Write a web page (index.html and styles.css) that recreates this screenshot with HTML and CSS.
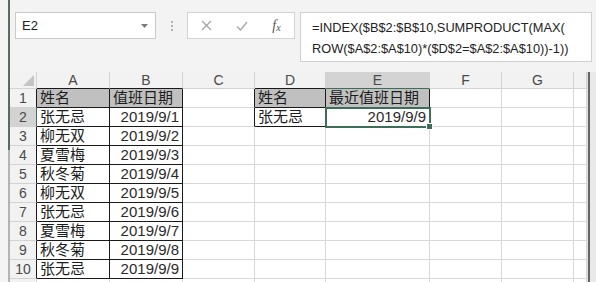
FILE: index.html
```html
<!DOCTYPE html>
<html lang="zh-CN">
<head>
  <meta charset="UTF-8" />
  <title>值班日期</title>
  <link rel="stylesheet" href="styles.css">
</head>
<body>
  <div class="window">
    <div class="edge">
      <div class="edge-top"></div>
      <div class="edge-rest"></div>
    </div>

    <div class="main">
      <!-- name box + formula bar -->
      <div class="toolbar">
        <div class="name-box">
          <span>E2</span>
          <svg class="caret" width="7" height="4" viewBox="0 0 7 4"><path d="M0 0h7L3.5 4z" fill="#7a7a7a"/></svg>
        </div>
        <div class="grip"><i></i><i></i><i></i></div>
        <div class="fx-buttons">
          <span class="btn">
            <svg width="11" height="11" viewBox="0 0 11 11"><path d="M1 1l9 9M10 1l-9 9" stroke="#a3a3a3" stroke-width="1.3" fill="none"/></svg>
          </span>
          <span class="btn">
            <svg width="12" height="10" viewBox="0 0 12 10"><path d="M1 5.5l3.5 3.5L11 1" stroke="#acacac" stroke-width="1.5" fill="none"/></svg>
          </span>
          <span class="btn fx"><em>f</em><em class="sub">x</em></span>
        </div>
        <div class="formula">
          =INDEX($B$2:$B$10,SUMPRODUCT(MAX(<br>
          ROW($A$2:$A$10)*($D$2=$A$2:$A$10))-1))
        </div>
      </div>

      <div class="sheet-wrap">
        <div class="grid">
          <!-- column headers -->
          <div class="c h corner">
            <svg width="11" height="11" viewBox="0 0 11 11"><path d="M11 0v11H0z" fill="#c4c4c4"/></svg>
          </div>
          <div class="c h kb">A</div>
          <div class="c h kb">B</div>
          <div class="c h">C</div>
          <div class="c h kb">D</div>
          <div class="c h h-sel">E</div>
          <div class="c h">F</div>
          <div class="c h">G</div>
          <div class="c h"></div>

          <!-- row 1 -->
          <div class="c rh kr">1</div>
          <div class="c fill kr kb">姓名</div>
          <div class="c fill kr kb">值班日期</div>
          <div class="c kr"></div>
          <div class="c fill kr kb">姓名</div>
          <div class="c fill kr kb">最近值班日期</div>
          <div class="c"></div>
          <div class="c"></div>
          <div class="c"></div>

          <!-- row 2 -->
          <div class="c rh rh-sel">2</div>
          <div class="c kr kb">张无忌</div>
          <div class="c kr kb num">2019/9/1</div>
          <div class="c kr"></div>
          <div class="c kr kb">张无忌</div>
          <div class="c kr kb num active">2019/9/9</div>
          <div class="c"></div>
          <div class="c"></div>
          <div class="c"></div>

          <!-- row 3 -->
          <div class="c rh kr">3</div>
          <div class="c kr kb">柳无双</div>
          <div class="c kr kb num">2019/9/2</div>
          <div class="c"></div><div class="c"></div><div class="c"></div><div class="c"></div><div class="c"></div><div class="c"></div>

          <!-- row 4 -->
          <div class="c rh kr">4</div>
          <div class="c kr kb">夏雪梅</div>
          <div class="c kr kb num">2019/9/3</div>
          <div class="c"></div><div class="c"></div><div class="c"></div><div class="c"></div><div class="c"></div><div class="c"></div>

          <!-- row 5 -->
          <div class="c rh kr">5</div>
          <div class="c kr kb">秋冬菊</div>
          <div class="c kr kb num">2019/9/4</div>
          <div class="c"></div><div class="c"></div><div class="c"></div><div class="c"></div><div class="c"></div><div class="c"></div>

          <!-- row 6 -->
          <div class="c rh kr">6</div>
          <div class="c kr kb">柳无双</div>
          <div class="c kr kb num">2019/9/5</div>
          <div class="c"></div><div class="c"></div><div class="c"></div><div class="c"></div><div class="c"></div><div class="c"></div>

          <!-- row 7 -->
          <div class="c rh kr">7</div>
          <div class="c kr kb">张无忌</div>
          <div class="c kr kb num">2019/9/6</div>
          <div class="c"></div><div class="c"></div><div class="c"></div><div class="c"></div><div class="c"></div><div class="c"></div>

          <!-- row 8 -->
          <div class="c rh kr">8</div>
          <div class="c kr kb">夏雪梅</div>
          <div class="c kr kb num">2019/9/7</div>
          <div class="c"></div><div class="c"></div><div class="c"></div><div class="c"></div><div class="c"></div><div class="c"></div>

          <!-- row 9 -->
          <div class="c rh kr">9</div>
          <div class="c kr kb">秋冬菊</div>
          <div class="c kr kb num">2019/9/8</div>
          <div class="c"></div><div class="c"></div><div class="c"></div><div class="c"></div><div class="c"></div><div class="c"></div>

          <!-- row 10 -->
          <div class="c rh kr">10</div>
          <div class="c kr kb">张无忌</div>
          <div class="c kr kb num">2019/9/9</div>
          <div class="c"></div><div class="c"></div><div class="c"></div><div class="c"></div><div class="c"></div><div class="c"></div>

          <!-- row 11, only its top edge shows -->
          <div class="c rh"></div>
          <div class="c"></div><div class="c"></div><div class="c"></div><div class="c"></div><div class="c"></div><div class="c"></div><div class="c"></div><div class="c"></div>
        </div>

        <div class="vscroll"></div>
      </div>
    </div>
  </div>
</body>
</html>
```

FILE: styles.css
```css
html, body {
  margin: 0;
  height: 100%;
  overflow: hidden;
  background: #ffffff;
}
.window {
  display: flex;
  height: 282px;
  font-family: "Liberation Sans", "Noto Sans CJK SC", sans-serif;
  color: #1c1c1c;
}
.edge {
  width: 8px;
  display: flex;
  flex-direction: column;
  background: #f4f4f4;
}
.edge-top {
  height: 150px;
  margin-right: -2px;
  border-right: 2px solid #5c6a62;
}
.edge-rest {
  flex: 1;
  margin-right: -2px;
  border-right: 2px solid #b4b4b4;
}
.main {
  margin-left: 2px;
  width: 586px;
  display: flex;
  flex-direction: column;
}

/* toolbar */
.toolbar {
  height: 72px;
  box-sizing: border-box;
  background: #f3f3f3;
  padding: 12px 0 0 5px;
  display: flex;
  align-items: flex-start;
}
.name-box {
  width: 141px;
  height: 27px;
  box-sizing: border-box;
  border: 1px solid #c9c9c9;
  background: #fff;
  display: flex;
  align-items: center;
  justify-content: space-between;
  padding: 0 7px 0 6px;
  font-size: 13px;
  color: #222;
}
.caret {
  margin-top: 1px;
}
.grip {
  width: 31px;
  height: 27px;
  display: flex;
  flex-direction: column;
  align-items: center;
  justify-content: center;
  gap: 2px;
}
.grip i {
  display: block;
  width: 2px;
  height: 2px;
  background: #b3b3b3;
}
.fx-buttons {
  width: 108px;
  height: 27px;
  box-sizing: border-box;
  border: 1px solid #d3d3d3;
  background: #fff;
  display: flex;
  padding-left: 1px;
}
.btn {
  width: 36px;
  display: flex;
  align-items: center;
  justify-content: center;
}
.fx {
  font-family: "Liberation Serif", serif;
  color: #555;
  font-size: 14px;
}
.fx .sub {
  font-size: 10px;
  margin-top: 3px;
}
.formula {
  margin-left: 5px;
  width: 292px;
  height: 50px;
  box-sizing: border-box;
  border: 1px solid #d0d0d0;
  background: #fff;
  padding: 4px 0 0 11px;
  font-size: 12.8px;
  line-height: 21px;
  color: #222;
  white-space: nowrap;
}

/* sheet */
.sheet-wrap {
  display: flex;
  flex: 1;
  overflow: hidden;
}
.grid {
  display: grid;
  grid-template-columns: 27px 73px 73px 72px 71px 104px 72px 72px 13px;
  grid-template-rows: 17px;
  grid-auto-rows: 19px;
  width: 577px;
}
.c {
  box-sizing: border-box;
  border-right: 1px solid #d8d8d8;
  border-bottom: 1px solid #d8d8d8;
  padding: 0 3px;
  font-size: 15px;
  line-height: 18px;
  white-space: nowrap;
  overflow: hidden;
}
.h, .rh {
  background: #f2f2f2;
  color: #4a4a4a;
  text-align: center;
  font-size: 14px;
  padding: 0;
}
.h {
  line-height: 17px;
  border-color: #d2d2d2;
}
.rh {
  border-bottom-color: #d2d2d2;
}
.corner {
  display: flex;
  align-items: flex-end;
  justify-content: flex-end;
  padding: 0 2px 2px 0;
}
.h-sel, .rh-sel {
  background: #d3d3d3;
}
.h-sel {
  border-bottom-color: #3d6f58;
}
.rh-sel {
  border-right-color: #3d6f58;
}
.fill {
  background: #c0c0c0;
}
.kr {
  border-right-color: #1a1a1a;
}
.kb {
  border-bottom-color: #1a1a1a;
}
.num {
  text-align: right;
  color: #2a2a2a;
}
.active {
  position: relative;
  z-index: 1;
  outline: 2px solid #3d6f58;
  outline-offset: -1px;
  overflow: visible;
}
.active::after {
  content: "";
  position: absolute;
  right: -4px;
  bottom: -4px;
  width: 5px;
  height: 5px;
  background: #3d6f58;
  border: 1px solid #fff;
}
.vscroll {
  width: 9px;
  box-sizing: border-box;
  border-left: 1px solid #dedede;
  border-right: 6px solid #e9e9e9;
  background: #666;
}
```
